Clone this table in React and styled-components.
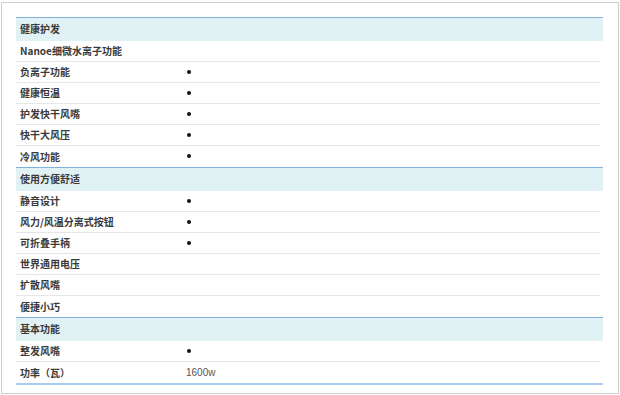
import React from "react";
import styled, { createGlobalStyle } from "styled-components";

const Global = createGlobalStyle`
  html, body { margin: 0; padding: 0; background: #fff; }
  body { font-family: "Noto Sans CJK SC", "Noto Sans", sans-serif; }
`;

const Frame = styled.div`
  box-sizing: border-box;
  margin: 2px 0 0 1px;
  width: 618px;
  height: 392px;
  border: 1px solid #cfcfcf;
  padding: 14px 0 0 14px;
`;

const Table = styled.div`
  width: 587px;
  display: flex;
  flex-direction: column;
  border-bottom: 2px solid #a9cdee;
`;

const Header = styled.div`
  box-sizing: border-box;
  height: 24px;
  border-top: 1px solid #84b1dc;
  background: #e1f2f5;
  display: flex;
  align-items: center;
  padding: 0 0 2px 4px;
  font-size: 10px;
  font-weight: 700;
  color: #3a3a3a;
`;

const Row = styled.div`
  box-sizing: border-box;
  height: 21px;
  display: grid;
  grid-template-columns: 166px 1fr;
  align-items: center;
  padding-bottom: 1px;
  border-bottom: ${(p) => (p.$last ? "none" : "1px solid #e6e6e6")};
  margin-right: 3px;
  font-size: 10px;
  color: #3a3a3a;
`;

const Label = styled.div`
  padding-left: 4px;
  white-space: nowrap;
  font-weight: 700;
`;

const Value = styled.div`
  padding-left: 4px;
  font-family: "Liberation Sans", Arial, sans-serif;
  font-size: 10px;
  color: #555;
  display: flex;
  align-items: center;
`;

const Dot = styled.span`
  display: inline-block;
  width: 4px;
  height: 4px;
  border-radius: 50%;
  background: #111;
  margin-left: 1px;
`;

const sections = [
  {
    title: "健康护发",
    rows: [
      ["Nanoe细微水离子功能", null],
      ["负离子功能", "dot"],
      ["健康恒温", "dot"],
      ["护发快干风嘴", "dot"],
      ["快干大风压", "dot"],
      ["冷风功能", "dot"],
    ],
  },
  {
    title: "使用方便舒适",
    rows: [
      ["静音设计", "dot"],
      ["风力/风温分离式按钮", "dot"],
      ["可折叠手柄", "dot"],
      ["世界通用电压", null],
      ["扩散风嘴", null],
      ["便捷小巧", null],
    ],
  },
  {
    title: "基本功能",
    rows: [
      ["整发风嘴", "dot"],
      ["功率（瓦）", "1600w"],
    ],
  },
];

export default function App() {
  return (
    <>
      <Global />
      <Frame>
        <Table>
          {sections.map((s) => (
            <React.Fragment key={s.title}>
              <Header>{s.title}</Header>
              {s.rows.map(([label, v], ri) => (
                <Row key={label} $last={ri === s.rows.length - 1}>
                  <Label>{label}</Label>
                  <Value>{v === "dot" ? <Dot /> : v}</Value>
                </Row>
              ))}
            </React.Fragment>
          ))}
        </Table>
      </Frame>
    </>
  );
}
